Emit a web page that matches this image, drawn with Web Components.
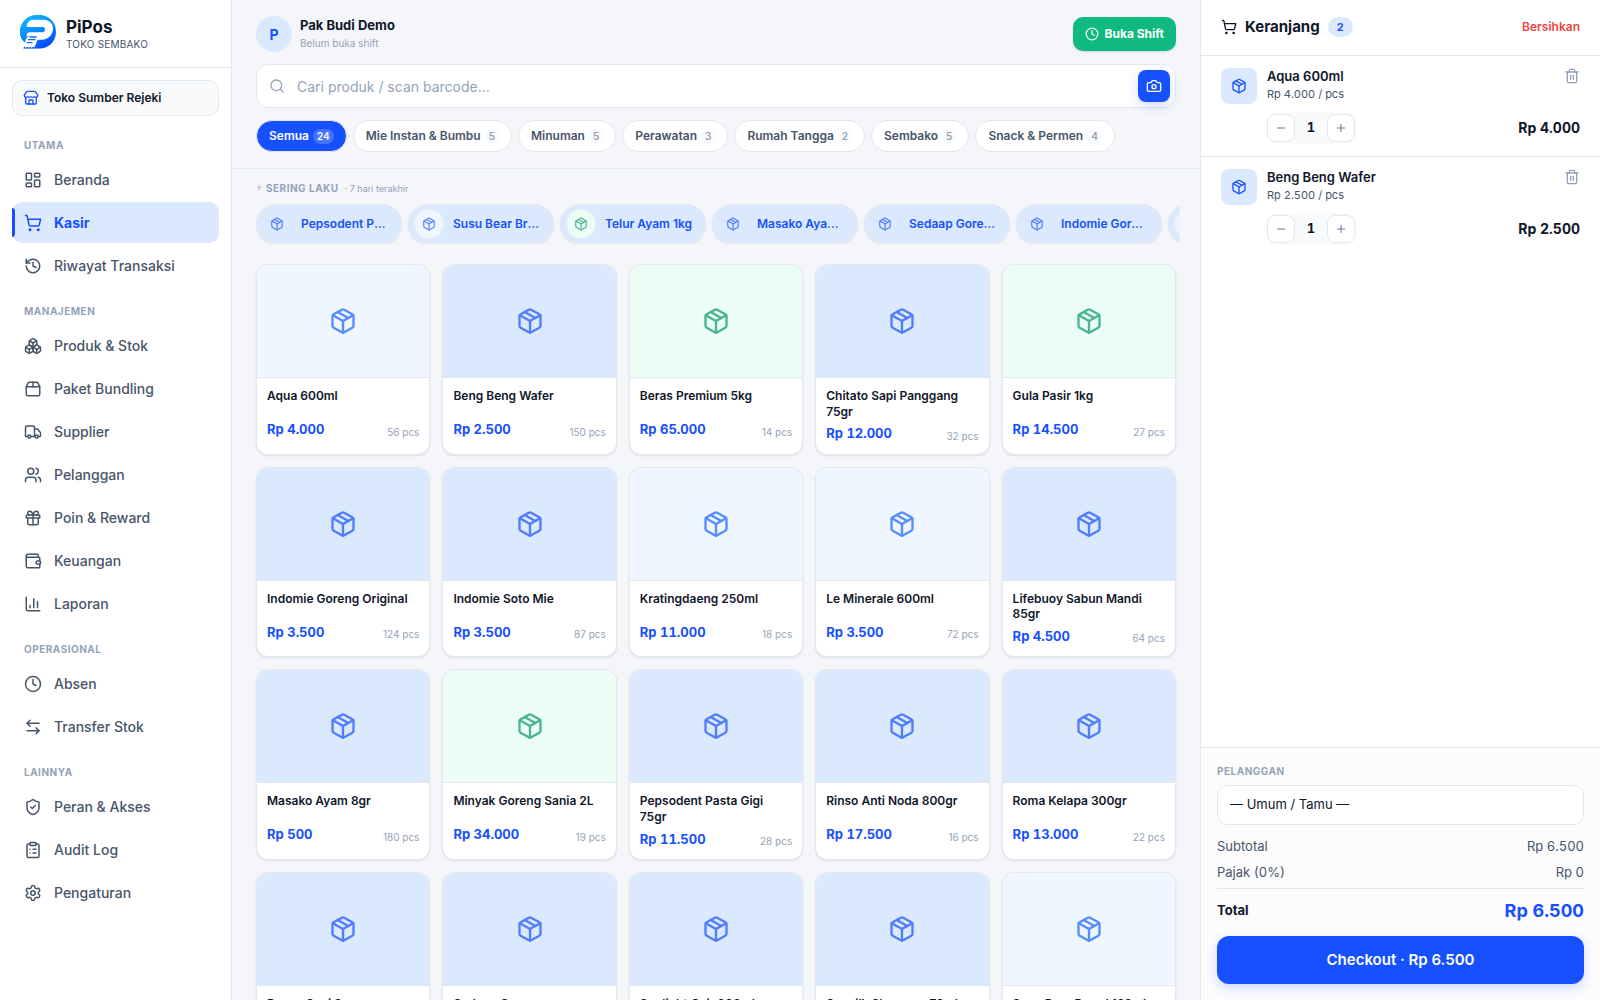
<!DOCTYPE html>
<html lang="id">
<head>
<meta charset="utf-8">
<title>PiPos Kasir</title>
<meta name="viewport" content="width=device-width, initial-scale=1">
<style>
:root{
  --primary:#1650ff;--soft:#dbe9fe;--ink:#0f172a;--muted:#475569;--faint:#94a3b8;
  --line:#e2e8f0;--bg:#f5f6fa;--pale:#f8fafc;
}
html,body{margin:0;height:100%}
body{font-family:Inter,"Liberation Sans",sans-serif;font-size:14px;line-height:1.5;color:var(--ink);background:var(--bg)}
</style>
</head>
<body>
<pos-app></pos-app>
<script>
const ICONS={
dashboard:'<rect width="7" height="9" x="3" y="3" rx="1"/><rect width="7" height="5" x="14" y="3" rx="1"/><rect width="7" height="9" x="14" y="12" rx="1"/><rect width="7" height="5" x="3" y="16" rx="1"/>',
cart:'<circle cx="8" cy="21" r="1"/><circle cx="19" cy="21" r="1"/><path d="M2.05 2.05h2l2.66 12.42a2 2 0 0 0 2 1.58h9.78a2 2 0 0 0 1.95-1.57l1.65-7.43H5.12"/>',
history:'<path d="M3 12a9 9 0 1 0 9-9 9.75 9.75 0 0 0-6.74 2.74L3 8"/><path d="M3 3v5h5"/><path d="M12 7v5l4 2"/>',
boxes:'<path d="M2.97 12.92A2 2 0 0 0 2 14.63v3.24a2 2 0 0 0 .97 1.71l3 1.8a2 2 0 0 0 2.06 0L12 19v-5.5l-5-3-4.03 2.42Z"/><path d="m7 16.5-4.74-2.85"/><path d="m7 16.5 5-3"/><path d="M7 16.5v5.17"/><path d="M12 13.5V19l3.97 2.38a2 2 0 0 0 2.06 0l3-1.8a2 2 0 0 0 .97-1.71v-3.24a2 2 0 0 0-.97-1.71L17 10.5l-5 3Z"/><path d="m17 16.5-5-3"/><path d="m17 16.5 4.74-2.85"/><path d="M17 16.5v5.17"/><path d="M7.97 4.42A2 2 0 0 0 7 6.13v4.37l5 3 5-3V6.13a2 2 0 0 0-.97-1.71l-3-1.8a2 2 0 0 0-2.06 0l-3 1.8Z"/><path d="M12 8 7.26 5.15"/><path d="m12 8 4.74-2.85"/><path d="M12 13.5V8"/>',
bundle:'<path d="M12 3v6"/><path d="M16.76 3a2 2 0 0 1 1.8 1.1l2.23 4.479a2 2 0 0 1 .21.891V19a2 2 0 0 1-2 2H5a2 2 0 0 1-2-2V9.472a2 2 0 0 1 .211-.894L5.45 4.1A2 2 0 0 1 7.24 3z"/><path d="M3.054 9.013h17.893"/>',
truck:'<path d="M14 18V6a2 2 0 0 0-2-2H4a2 2 0 0 0-2 2v11a1 1 0 0 0 1 1h2"/><path d="M15 18H9"/><path d="M19 18h2a1 1 0 0 0 1-1v-3.65a1 1 0 0 0-.22-.624l-3.48-4.35A1 1 0 0 0 17.52 8H14"/><circle cx="17" cy="18" r="2"/><circle cx="7" cy="18" r="2"/>',
users:'<path d="M16 21v-2a4 4 0 0 0-4-4H6a4 4 0 0 0-4 4v2"/><path d="M16 3.128a4 4 0 0 1 0 7.744"/><path d="M22 21v-2a4 4 0 0 0-3-3.87"/><circle cx="9" cy="7" r="4"/>',
gift:'<rect x="3" y="8" width="18" height="4" rx="1"/><path d="M12 8v13"/><path d="M19 12v7a2 2 0 0 1-2 2H7a2 2 0 0 1-2-2v-7"/><path d="M7.5 8a2.5 2.5 0 0 1 0-5A4.8 8 0 0 1 12 8a4.8 8 0 0 1 4.5-5 2.5 2.5 0 0 1 0 5"/>',
wallet:'<path d="M19 7V4a1 1 0 0 0-1-1H5a2 2 0 0 0 0 4h15a1 1 0 0 1 1 1v4h-3a2 2 0 0 0 0 4h3a1 1 0 0 0 1-1v-2a1 1 0 0 0-1-1"/><path d="M3 5v14a2 2 0 0 0 2 2h15a1 1 0 0 0 1-1v-4"/>',
chart:'<path d="M3 3v16a2 2 0 0 0 2 2h16"/><path d="M18 17V9"/><path d="M13 17V5"/><path d="M8 17v-3"/>',
clock:'<circle cx="12" cy="12" r="10"/><path d="M12 6v6l4 2"/>',
transfer:'<path d="M8 3 4 7l4 4"/><path d="M4 7h16"/><path d="m16 21 4-4-4-4"/><path d="M20 17H4"/>',
shield:'<path d="M20 13c0 5-3.5 7.5-7.66 8.95a1 1 0 0 1-.67-.01C7.5 20.5 4 18 4 13V6a1 1 0 0 1 1-1c2 0 4.5-1.2 6.24-2.72a1.17 1.17 0 0 1 1.52 0C14.51 3.81 17 5 19 5a1 1 0 0 1 1 1z"/><path d="m9 12 2 2 4-4"/>',
clipboard:'<rect width="8" height="4" x="8" y="2" rx="1"/><path d="M16 4h2a2 2 0 0 1 2 2v14a2 2 0 0 1-2 2H6a2 2 0 0 1-2-2V6a2 2 0 0 1 2-2h2"/><path d="M12 11h4"/><path d="M12 16h4"/><path d="M8 11h.01"/><path d="M8 16h.01"/>',
settings:'<path d="M9.671 4.136a2.34 2.34 0 0 1 4.659 0 2.34 2.34 0 0 0 3.319 1.915 2.34 2.34 0 0 1 2.33 4.033 2.34 2.34 0 0 0 0 3.831 2.34 2.34 0 0 1-2.33 4.033 2.34 2.34 0 0 0-3.319 1.915 2.34 2.34 0 0 1-4.659 0 2.34 2.34 0 0 0-3.32-1.915 2.34 2.34 0 0 1-2.33-4.033 2.34 2.34 0 0 0 0-3.831A2.34 2.34 0 0 1 6.35 6.051a2.34 2.34 0 0 0 3.319-1.915"/><circle cx="12" cy="12" r="3"/>',
store:'<path d="M15 21v-5a1 1 0 0 0-1-1h-4a1 1 0 0 0-1 1v5"/><path d="M17.774 10.31a1.12 1.12 0 0 0-1.549 0 2.5 2.5 0 0 1-3.451 0 1.12 1.12 0 0 0-1.548 0 2.5 2.5 0 0 1-3.452 0 1.12 1.12 0 0 0-1.549 0 2.5 2.5 0 0 1-3.77-3.248l2.889-4.184A2 2 0 0 1 7 2h10a2 2 0 0 1 1.653.873l2.895 4.192a2.5 2.5 0 0 1-3.774 3.244"/><path d="M4 10.95V19a2 2 0 0 0 2 2h12a2 2 0 0 0 2-2v-8.05"/>',
search:'<circle cx="11" cy="11" r="8"/><path d="m21 21-4.3-4.3"/>',
camera:'<path d="M14.5 4h-5L7 7H4a2 2 0 0 0-2 2v9a2 2 0 0 0 2 2h16a2 2 0 0 0 2-2V9a2 2 0 0 0-2-2h-3z"/><circle cx="12" cy="13" r="3"/>',
package:'<path d="M11 21.73a2 2 0 0 0 2 0l7-4A2 2 0 0 0 21 16V8a2 2 0 0 0-1-1.73l-7-4a2 2 0 0 0-2 0l-7 4A2 2 0 0 0 3 8v8a2 2 0 0 0 1 1.73z"/><path d="M12 22V12"/><path d="M3.29 7 12 12l8.71-5"/><path d="m7.5 4.27 9 5.15"/>',
trash:'<path d="M10 11v6"/><path d="M14 11v6"/><path d="M19 6v14a2 2 0 0 1-2 2H7a2 2 0 0 1-2-2V6"/><path d="M3 6h18"/><path d="M8 6V4a2 2 0 0 1 2-2h4a2 2 0 0 1 2 2v2"/>',
minus:'<path d="M5 12h14"/>',
plus:'<path d="M5 12h14"/><path d="M12 5v14"/>'
};
const BASE='*{box-sizing:border-box}button{font:inherit;color:inherit;margin:0;padding:0;border:0;background:none;cursor:pointer}a{color:inherit;text-decoration:none}';

class Base extends HTMLElement{
  connectedCallback(){
    if(this.shadowRoot)return;
    this.attachShadow({mode:'open'}).innerHTML='<style>'+BASE+this.css()+'</style>'+this.html();
  }
  get(n,d=''){return this.getAttribute(n)??d}
}

customElements.define('pos-icon',class extends Base{
  css(){return `:host{display:block;flex:none;width:${this.get('size',18)}px;height:${this.get('size',18)}px}svg{display:block;width:100%;height:100%}`}
  html(){return `<svg viewBox="0 0 24 24" fill="none" stroke="currentColor" stroke-width="${this.get('stroke',2)}" stroke-linecap="round" stroke-linejoin="round" aria-hidden="true">${ICONS[this.get('name')]}</svg>`}
});

customElements.define('pos-logo',class extends Base{
  css(){return `:host{display:block;flex:none;width:36px;height:36px}svg{display:block;width:100%;height:100%}`}
  html(){return `<svg viewBox="0 0 108 108" aria-hidden="true">
    <defs><linearGradient id="g" gradientUnits="userSpaceOnUse" x1="22" y1="0" x2="76" y2="108"><stop offset="0" stop-color="#12bdff"/><stop offset=".5" stop-color="#0a86ff"/><stop offset="1" stop-color="#0540ff"/></linearGradient>
    <clipPath id="c"><path d="M54 2C86 2 108 24 108 53S86 104 54 104H10L18 88C6 80 0 67 0 53 0 24 22 2 54 2Z"/></clipPath></defs>
    <g clip-path="url(#c)"><rect width="108" height="108" fill="url(#g)"/>
    <path d="M20 40C20 25 29 17 41 17H70C88 17 99 28 99 44 99 61 86 75 68 77H56C52 78 51 81 50 84L43 101H8L18 76C20 70 24 68 32 67H20Z" fill="#fff"/>
    <path d="M0 39H70A9 9 0 0 1 70 55H30C19 56 16 66 13 76L0 90Z" fill="url(#g)"/>
    <path d="M30 69H48M26 77H45M22 86H36" stroke="#1464ff" stroke-width="4" stroke-linecap="round"/>
    <path d="M10 101h6m3 0h6m3 0h6m3 0h10" stroke="#1464ff" stroke-width="4"/></g></svg>`}
});

customElements.define('nav-item',class extends Base{
  css(){return `:host{display:block}
    a{display:flex;align-items:center;gap:12px;padding:10px 12px;border-radius:10px;color:var(--muted);font-weight:500;position:relative}
    :host([active]) a{background:var(--soft);color:var(--primary);font-weight:700}
    :host([active]) a::before{content:"";position:absolute;left:0;top:6px;bottom:6px;width:3px;border-radius:0 3px 3px 0;background:var(--primary)}`}
  html(){return `<a href="#"><pos-icon name="${this.get('icon')}"></pos-icon><slot></slot></a>`}
});

customElements.define('nav-section',class extends Base{
  css(){return `:host{display:flex;flex-direction:column;gap:2px}
    h2{margin:0;padding:18px 12px 4px;font-size:10px;line-height:15px;font-weight:700;letter-spacing:.05em;color:var(--faint);text-transform:uppercase}`}
  html(){return `<h2>${this.get('heading')}</h2><slot></slot>`}
});

const NAV=[['Utama',[['dashboard','Beranda'],['cart','Kasir',1],['history','Riwayat Transaksi']]],
['Manajemen',[['boxes','Produk &amp; Stok'],['bundle','Paket Bundling'],['truck','Supplier'],['users','Pelanggan'],['gift','Poin &amp; Reward'],['wallet','Keuangan'],['chart','Laporan']]],
['Operasional',[['clock','Absen'],['transfer','Transfer Stok']]],
['Lainnya',[['shield','Peran &amp; Akses'],['clipboard','Audit Log'],['settings','Pengaturan']]]];

customElements.define('pos-sidebar',class extends Base{
  css(){return `:host{display:flex;flex-direction:column;flex:none;width:232px;background:#fff;border-right:1px solid var(--line)}
    .brand{display:flex;align-items:flex-start;gap:10px;padding:14px 20px 0;height:68px;border-bottom:1px solid var(--line)}
    .brand b{display:block;font-size:17px;line-height:26px;font-weight:700}
    .brand span{display:block;font-size:10px;line-height:9px;letter-spacing:.02em;color:var(--muted)}
    .body{padding:12px;display:flex;flex-direction:column}
    .store{display:flex;align-items:center;gap:8px;height:36px;padding:0 10px;border:1px solid var(--line);border-radius:10px;background:var(--pale);font-size:12px;font-weight:600;margin-bottom:4px}
    .store pos-icon{color:var(--primary)}`}
  html(){return `<div class="brand"><pos-logo></pos-logo><div><b>PiPos</b><span>TOKO SEMBAKO</span></div></div>
    <div class="body"><button class="store"><pos-icon name="store" size="16"></pos-icon>Toko Sumber Rejeki</button>
    <nav>${NAV.map(([h,l])=>`<nav-section heading="${h}">${l.map(([i,t,a])=>`<nav-item icon="${i}"${a?' active':''}>${t}</nav-item>`).join('')}</nav-section>`).join('')}</nav></div>`}
});

customElements.define('category-chip',class extends Base{
  css(){return `:host{display:block;flex:none}
    button{display:flex;align-items:center;gap:4px;height:32px;padding:0 12px;border:1px solid var(--line);border-radius:16px;background:#fff;color:var(--muted);font-size:12px;font-weight:600}
    span{font-size:10px;line-height:15px;padding:0 4px;border-radius:8px;background:var(--pale);color:var(--faint)}
    :host([active]) button{background:var(--primary);color:#fff}
    :host([active]) span{background:#4573ff;color:#fff}`}
  html(){return `<button><slot></slot><span>${this.get('count')}</span></button>`}
});

customElements.define('quick-item',class extends Base{
  css(){return `:host{display:block;flex:none;width:146px}
    button{display:flex;align-items:center;gap:9px;width:100%;height:40px;padding:0 12px 0 5px;border:1px solid var(--line);border-radius:20px;background:var(--soft);box-shadow:0 1px 2px rgba(15,23,42,.08);color:var(--primary);font-size:12px;font-weight:600;text-align:left}
    i{display:flex;align-items:center;justify-content:center;flex:none;width:30px;height:30px;border-radius:50%;background:var(--soft);border:1px solid rgba(226,232,240,.5)}
    i pos-icon{opacity:.7}
    :host([tone=drink]) i{background:#eff6ff}
    :host([tone=green]) i{background:#ecfdf5;color:#059669}
    span{flex:1;min-width:0;overflow:hidden;text-overflow:ellipsis;white-space:nowrap}`}
  html(){return `<button><i><pos-icon name="package" size="14"></pos-icon></i><span><slot></slot></span></button>`}
});

customElements.define('product-card',class extends Base{
  css(){return `:host{display:flex;min-width:0}
    button{display:flex;flex-direction:column;width:100%;border:1px solid var(--line);border-radius:12px;background:#fff;overflow:hidden;text-align:left;box-shadow:0 1px 2px rgba(15,23,42,.1)}
    .art{display:flex;align-items:center;justify-content:center;height:113px;width:100%;background:var(--soft);border-bottom:1px solid var(--line);color:var(--primary)}
    .art pos-icon{opacity:.7}
    :host([tone=drink]) .art{background:#eff6ff;color:#1461ff}
    :host([tone=green]) .art{background:#ecfdf5;color:#059669}
    .info{width:100%;padding:10px}
    .name{font-size:12px;line-height:1.3;font-weight:600;min-height:27px;margin-bottom:5px}
    .row{display:flex;justify-content:space-between;align-items:flex-end}
    .price{font-size:13px;font-weight:700;color:var(--primary);font-variant-numeric:tabular-nums}
    .stock{font-size:10px;color:var(--faint)}`}
  html(){return `<button><div class="art"><pos-icon name="package" size="28"></pos-icon></div><div class="info"><div class="name"><slot></slot></div>
    <div class="row"><span class="price">${this.get('price')}</span><span class="stock">${this.get('stock')} pcs</span></div></div></button>`}
});

const CATS=[['Semua',24,1],['Mie Instan &amp; Bumbu',5],['Minuman',5],['Perawatan',3],['Rumah Tangga',2],['Sembako',5],['Snack &amp; Permen',4]];
const QUICK=[['Pepsodent Pasta Gigi 75gr'],['Susu Bear Brand 189ml','drink'],['Telur Ayam 1kg','green'],['Masako Ayam 8gr'],['Sedaap Goreng'],['Indomie Goreng Original'],['Aqua 600ml','drink']];
const PRODUCTS=[['Aqua 600ml','4.000',56,'drink'],['Beng Beng Wafer','2.500',150],['Beras Premium 5kg','65.000',14,'green'],['Chitato Sapi Panggang 75gr','12.000',32],['Gula Pasir 1kg','14.500',27,'green'],
['Indomie Goreng Original','3.500',124],['Indomie Soto Mie','3.500',87],['Kratingdaeng 250ml','11.000',18,'drink'],['Le Minerale 600ml','3.500',72,'drink'],['Lifebuoy Sabun Mandi 85gr','4.500',64],
['Masako Ayam 8gr','500',180],['Minyak Goreng Sania 2L','34.000',19,'green'],['Pepsodent Pasta Gigi 75gr','11.500',28],['Rinso Anti Noda 800gr','17.500',16],['Roma Kelapa 300gr','13.000',22],
['Royco Sapi 8gr','500',140],['Sedaap Goreng','3.000',96],['Sunlight Cair 800ml','15.000',20],['Sunsilk Shampoo 70ml','6.000',30],['Susu Bear Brand 189ml','10.500',40,'drink']];

customElements.define('pos-catalog',class extends Base{
  css(){return `:host{display:flex;flex-direction:column;flex:1;min-width:0;height:100%;overflow:hidden}
    header{display:flex;flex-direction:column;gap:12px;padding:16px 24px;border-bottom:1px solid var(--line)}
    .user{display:flex;align-items:center;gap:8px}
    .avatar{display:flex;align-items:center;justify-content:center;width:36px;height:36px;border-radius:50%;background:var(--soft);color:var(--primary);font-weight:700}
    .who{flex:1}
    .who b{display:block;font-size:13px;line-height:17px;font-weight:700;margin-bottom:2px}
    .who span{display:block;font-size:10px;line-height:15px;color:var(--faint)}
    .shift{display:flex;align-items:center;gap:6px;height:34px;padding:0 12px;border-radius:10px;background:#10b981;color:#fff;font-size:12px;font-weight:700;box-shadow:0 1px 2px rgba(15,23,42,.15)}
    .search{display:flex;align-items:center;gap:12px;height:44px;padding:0 5px 0 12px;border:1px solid var(--line);border-radius:12px;background:#fff;color:var(--faint)}
    input{flex:1;min-width:0;border:0;outline:0;background:none;font:inherit;font-size:14px;color:var(--ink);padding:0}
    input::placeholder{color:var(--faint);opacity:1}
    .cam{display:flex;align-items:center;justify-content:center;width:32px;height:32px;border-radius:8px;background:var(--primary);color:#fff;box-shadow:0 4px 12px rgba(22,80,255,.2)}
    .cats{display:flex;gap:6px}
    .scroll{flex:1;min-height:0;overflow:hidden;padding:12px 20px 24px 24px}
    h2{display:flex;align-items:center;margin:0 0 8px;font-size:10px;line-height:15px;font-weight:700;color:var(--faint);letter-spacing:.05em}
    h2 i{font:normal 400 9px/15px "DejaVu Sans",sans-serif;letter-spacing:0;width:10px}
    h2 small{font-size:9px;font-weight:400;margin-left:6px;letter-spacing:0}
    .quick{display:flex;gap:6px;overflow:hidden}
    .grid{display:grid;grid-template-columns:repeat(5,minmax(0,1fr));gap:12px;padding:20px 4px 0 0}`}
  html(){return `<header><div class="user"><div class="avatar">P</div><div class="who"><b>Pak Budi Demo</b><span>Belum buka shift</span></div>
      <button class="shift"><pos-icon name="clock" size="14"></pos-icon>Buka Shift</button></div>
    <div class="search"><pos-icon name="search" size="16"></pos-icon><input type="text" aria-label="Cari produk" placeholder="Cari produk / scan barcode..."><button class="cam" aria-label="Scan barcode"><pos-icon name="camera" size="16"></pos-icon></button></div>
    <div class="cats">${CATS.map(([t,c,a])=>`<category-chip count="${c}"${a?' active':''}>${t}</category-chip>`).join('')}</div></header>
    <div class="scroll"><h2><i>⚡&#xFE0E;</i>SERING LAKU <small>· 7 hari terakhir</small></h2>
    <div class="quick">${QUICK.map(([t,k])=>`<quick-item tone="${k||''}">${t}</quick-item>`).join('')}</div>
    <div class="grid">${PRODUCTS.map(([n,p,s,k])=>`<product-card price="Rp ${p}" stock="${s}" tone="${k||''}">${n}</product-card>`).join('')}</div></div>`}
});

customElements.define('cart-line',class extends Base{
  css(){return `:host{display:flex;gap:10px;padding:12px 20px;border-bottom:1px solid var(--line);font-variant-numeric:tabular-nums}
    :host(:last-of-type){border-bottom:0}
    .pic{display:flex;align-items:center;justify-content:center;flex:none;width:36px;height:36px;border-radius:8px;background:var(--soft);color:var(--primary)}
    .main{flex:1;display:flex;flex-direction:column;gap:8px}
    .top,.bottom{display:flex;justify-content:space-between;align-items:flex-start}
    .bottom{align-items:center}
    .name{font-size:13px;line-height:17px;font-weight:600;font-variant-numeric:normal}
    .unit{font-size:11px;line-height:19px;color:var(--muted)}
    .del{color:var(--faint)}
    .qty{display:flex;align-items:center;height:32px;padding:0 2px 0 0;border-radius:10px;background:var(--pale)}
    .qty button{display:flex;align-items:center;justify-content:center;width:28px;height:28px;border:1px solid var(--line);border-radius:8px;background:#fff;color:#64748b}
    output{width:32px;text-align:center;font-size:13px;font-weight:700}
    .sum{font-size:14px;line-height:20px;font-weight:700}`}
  html(){return `<div class="pic"><pos-icon name="package" size="16"></pos-icon></div><div class="main">
    <div class="top"><div><div class="name"><slot></slot></div><div class="unit">${this.get('price')} / pcs</div></div><button class="del" aria-label="Hapus"><pos-icon name="trash" size="16"></pos-icon></button></div>
    <div class="bottom"><div class="qty"><button aria-label="Kurang"><pos-icon name="minus" size="12"></pos-icon></button><output>1</output><button aria-label="Tambah"><pos-icon name="plus" size="12"></pos-icon></button></div><div class="sum">${this.get('price')}</div></div></div>`}
});

customElements.define('pos-cart',class extends Base{
  css(){return `:host{display:flex;flex-direction:column;flex:none;width:400px;height:100%;background:#fff;border-left:1px solid var(--line)}
    header{display:flex;align-items:center;gap:8px;height:56px;padding:0 20px 2px;border-bottom:1px solid var(--line)}
    h2{margin:0;font-size:15px;line-height:24px;font-weight:700}
    .badge{font-size:11px;line-height:20px;font-weight:700;padding:0 9px;border-radius:10px;background:var(--soft);color:var(--primary)}
    .clear{margin-left:auto;color:#ef4444;font-size:12px;font-weight:600}
    .lines{flex:1}
    footer{display:flex;flex-direction:column;padding:16px;border-top:1px solid var(--line);background:#fcfcfd}
    label{font-size:10px;line-height:15px;font-weight:700;letter-spacing:.05em;color:var(--faint);margin-bottom:6px}
    select{appearance:none;height:40px;padding:0 12px;margin-bottom:11px;border:1px solid var(--line);border-radius:10px;background:#fff;font:inherit;font-size:13px;color:var(--ink)}
    dl{margin:0;display:flex;flex-direction:column;gap:6px;font-variant-numeric:tabular-nums}
    dl div{display:flex;justify-content:space-between;align-items:center;font-size:13px;line-height:20px;color:var(--muted)}
    dt,dd{margin:0}
    dl .total{border-top:1px solid var(--line);padding-top:8px;color:var(--ink);font-weight:700;line-height:27px}
    .total dd{font-size:18px;color:var(--primary)}
    .pay{height:48px;margin-top:12px;border-radius:12px;background:var(--primary);color:#fff;font-size:15px;font-weight:600;box-shadow:0 4px 12px rgba(22,80,255,.2)}`}
  html(){return `<header><pos-icon name="cart" size="16"></pos-icon><h2>Keranjang</h2><span class="badge">2</span><button class="clear">Bersihkan</button></header>
    <div class="lines"><cart-line price="Rp 4.000">Aqua 600ml</cart-line><cart-line price="Rp 2.500">Beng Beng Wafer</cart-line></div>
    <footer><label for="cust">PELANGGAN</label><select id="cust"><option>— Umum / Tamu —</option></select>
    <dl><div><dt>Subtotal</dt><dd>Rp 6.500</dd></div><div><dt>Pajak (0%)</dt><dd>Rp 0</dd></div><div class="total"><dt>Total</dt><dd>Rp 6.500</dd></div></dl>
    <button class="pay">Checkout · Rp 6.500</button></footer>`}
});

customElements.define('pos-app',class extends Base{
  css(){return `:host{display:flex;height:100vh;overflow:hidden}`}
  html(){return `<pos-sidebar></pos-sidebar><pos-catalog></pos-catalog><pos-cart></pos-cart>`}
});
</script>
</body>
</html>
